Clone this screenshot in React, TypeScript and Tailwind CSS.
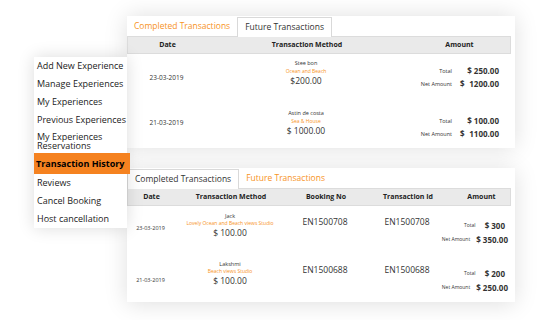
import React from "react";

const MENU = [
  "Add New Experience",
  "Manage Experiences",
  "My Experiences",
  "Previous Experiences",
];

const MENU_BOTTOM = ["Reviews", "Cancel Booking", "Host cancellation"];

const FUTURE = [
  {
    date: "23-03-2019",
    dateCls: "pt-[14px]",
    name: "Stee bon",
    place: "Ocean and Beach",
    price: "$200.00",
    total: "$ 250.00",
    net: "1200.00",
  },
  {
    date: "21-03-2019",
    dateCls: "pt-[9px]",
    name: "Astin de costa",
    place: "Sea & House",
    price: "$ 1000.00",
    total: "$ 100.00",
    net: "1100.00",
  },
];

const COMPLETED = [
  {
    date: "23-03-2019",
    dateCls: "pt-[11px]",
    name: "Jack",
    place: "Lovely Ocean and Beach views Studio",
    price: "$ 100.00",
    booking: "EN1500708",
    txn: "EN1500708",
    total: "$ 300",
    net: "$ 350.00",
  },
  {
    date: "21-03-2019",
    dateCls: "pt-[15px]",
    name: "Lakshmi",
    place: "Beach views Studio",
    price: "$ 100.00",
    booking: "EN1500688",
    txn: "EN1500688",
    total: "$ 200",
    net: "$ 250.00",
  },
];

function Tabs({ active }: { active: "completed" | "future" }) {
  const tab = (label: string, on: boolean) =>
    on ? (
      <div className="h-[20px] px-[7px] flex items-center border border-b-0 border-[#d9d9d9] bg-white text-[#333] relative top-[1px]">
        {label}
      </div>
    ) : (
      <div className="h-[20px] px-[7px] flex items-center text-[#f7931e]">
        {label}
      </div>
    );
  return (
    <div className="flex text-[8.5px] h-[20px]">
      {tab("Completed Transactions", active === "completed")}
      {tab("Future Transactions", active === "future")}
    </div>
  );
}

function FutureCard() {
  return (
    <div className="absolute left-[127px] top-[16px] w-[388px] h-[132px] bg-white shadow-[0_0_22px_rgba(0,0,0,0.13)]">
      <Tabs active="future" />
      <div className="mr-[4px]">
        <div className="grid grid-cols-[79px_200px_105px] h-[18px] items-center bg-[#eaeaea] border border-[#dcdcdc] font-bold text-[7px] text-[#222] text-center">
          <div>Date</div>
          <div>Transaction Method</div>
          <div>Amount</div>
        </div>
        {FUTURE.map((r) => (
          <div
            key={r.date}
            className="grid grid-cols-[79px_200px_105px] h-[50px] items-start pt-[5px] text-[#333]"
          >
            <div className={`text-center text-[6.5px] ${r.dateCls}`}>
              {r.date}
            </div>
            <div className="flex flex-col items-center">
              <div className="text-[5.5px] leading-[8px]">{r.name}</div>
              <div className="text-[5px] leading-[8px] text-[#f7931e]">
                {r.place}
              </div>
              <div className="text-[8.5px] leading-[11px]">{r.price}</div>
            </div>
            <div className="grid grid-cols-[auto_39px] gap-x-[8px] gap-y-[1px] justify-end items-center pr-[12px] pt-[6px]">
              <div className="text-[5.5px] text-right">Total</div>
              <div className="text-[8px] font-bold text-right">{r.total}</div>
              <div className="text-[5.5px] text-right">Net Amount</div>
              <div className="text-[8px] font-bold flex justify-between">
                <span>$</span>
                <span>{r.net}</span>
              </div>
            </div>
          </div>
        ))}
      </div>
    </div>
  );
}

function CompletedCard() {
  return (
    <div className="absolute left-[127px] top-[168px] w-[388px] h-[134px] bg-white shadow-[0_2px_22px_rgba(0,0,0,0.13)]">
      <Tabs active="completed" />
      <div className="mr-[4px]">
        <div className="grid grid-cols-[47px_112px_78px_86px_61px] h-[18px] items-center bg-[#eaeaea] border border-[#dcdcdc] font-bold text-[7px] text-[#222] text-center">
          <div>Date</div>
          <div>Transaction Method</div>
          <div>Booking No</div>
          <div>Transaction Id</div>
          <div>Amount</div>
        </div>
        {COMPLETED.map((r) => (
          <div
            key={r.date}
            className="grid grid-cols-[47px_112px_78px_86px_61px] h-[48px] items-start pt-[7px] text-[#333]"
          >
            <div className={`text-center text-[5.5px] ${r.dateCls}`}>
              {r.date}
            </div>
            <div className="flex flex-col items-center">
              <div className="text-[5.5px] leading-[7px]">{r.name}</div>
              <div className="text-[5px] leading-[7px] text-[#f7931e] whitespace-nowrap">
                {r.place}
              </div>
              <div className="text-[8.5px] leading-[11px]">{r.price}</div>
            </div>
            <div className="text-center text-[8.5px] pt-[3px]">{r.booking}</div>
            <div className="text-center text-[8.5px] pt-[3px]">{r.txn}</div>
            <div className="flex flex-col items-end pr-[3px] pt-[7px] gap-[2px] whitespace-nowrap">
              <div className="flex items-center justify-end gap-[9px] pr-[3px]">
                <span className="text-[5px]">Total</span>
                <span className="text-[8px] font-bold">{r.total}</span>
              </div>
              <div className="flex items-center justify-end gap-[6px]">
                <span className="text-[5px]">Net Amount</span>
                <span className="text-[8px] font-bold">{r.net}</span>
              </div>
            </div>
          </div>
        ))}
      </div>
    </div>
  );
}

function Menu() {
  return (
    <div className="absolute left-[34px] top-[57px] w-[93px] h-[171px] bg-white shadow-[0_0_16px_rgba(0,0,0,0.14)] z-10 text-[9px] text-[#222] whitespace-nowrap">
      {MENU.map((m) => (
        <div key={m} className="h-[18px] flex items-center pl-[3px]">
          {m}
        </div>
      ))}
      <div className="h-[24px] flex items-center pl-[3px]">
        <p className="w-[80px] whitespace-normal leading-[9px]">
          My Experiences Reservations
        </p>
      </div>
      <div className="h-[21px] flex items-center pl-[2px] mr-[-3px] bg-[#f58220] font-bold text-black">
        Transaction History
      </div>
      {MENU_BOTTOM.map((m) => (
        <div key={m} className="h-[18px] flex items-center pl-[3px]">
          {m}
        </div>
      ))}
    </div>
  );
}

export default function App() {
  return (
    <div
      className="relative w-[540px] h-[320px] bg-white overflow-hidden"
      style={{ fontFamily: '"Open Sans", "Liberation Sans", sans-serif' }}
    >
      <FutureCard />
      <CompletedCard />
      <Menu />
    </div>
  );
}
